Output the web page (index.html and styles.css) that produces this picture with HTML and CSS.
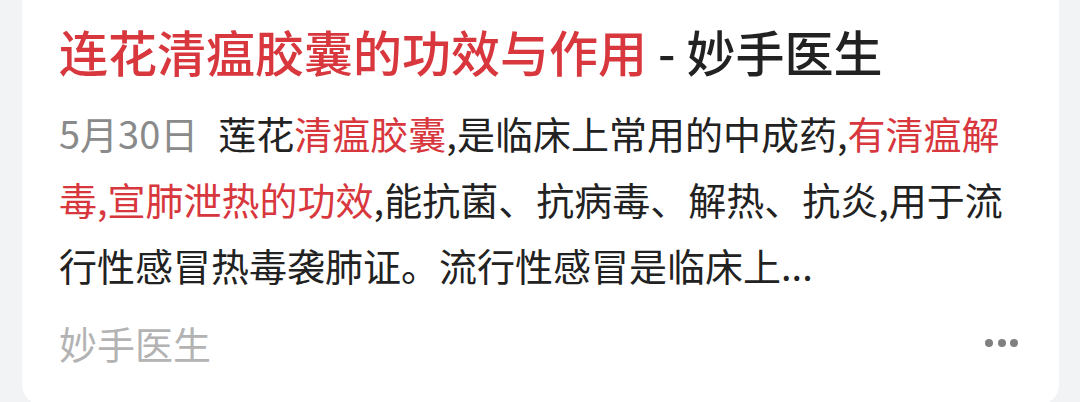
FILE: index.html
```html
<!DOCTYPE html>
<html lang="zh-CN">
<head>
<meta charset="utf-8">
<link rel="stylesheet" href="styles.css">
</head>
<body>
<div class="card">
  <h1 class="title"><span class="hl">连花清瘟胶囊的功效与作用</span> - 妙手医生</h1>
  <p class="summary"><span class="date">5月30日</span>莲花<span class="hl">清瘟胶囊</span>,是临床上常用的中成药,<span class="hl">有清瘟解毒,宣肺泄热的功效</span>,能抗菌、抗病毒、解热、抗炎,用于流行性感冒热毒袭肺证。流行性感冒是临床上...</p>
  <div class="footer">
    <span class="source">妙手医生</span>
    <span class="more"><i></i><i></i><i></i></span>
  </div>
</div>
</body>
</html>
```
FILE: styles.css
```css
html, body {
  margin: 0;
  padding: 0;
  background: #f2f3f5;
  font-family: "Noto Sans CJK SC", "Noto Sans", sans-serif;
  overflow: hidden;
}
.card {
  margin: 0 21px 0 22px;
  background: #ffffff;
  border-radius: 0 0 22px 22px;
  padding: 19px 37px 40px 37px;
  height: 406px;
  box-sizing: border-box;
}
.title {
  margin: 0;
  font-size: 49px;
  line-height: 64px;
  font-weight: 500;
  color: #222222;
  white-space: nowrap;
}
.hl {
  color: #d7373d;
}
.summary {
  margin: 17px 0 0 0;
  font-size: 38px;
  line-height: 66px;
  color: #222222;
}
.date {
  color: #8a8a8a;
  margin-right: 20px;
}
.footer {
  margin-top: 20px;
  display: flex;
  align-items: center;
  justify-content: space-between;
  height: 50px;
}
.source {
  font-size: 38px;
  color: #b3b3b3;
  line-height: 50px;
}
.more {
  display: flex;
  gap: 4.5px;
  margin-right: 4px;
}
.more i {
  width: 8px;
  height: 8px;
  border-radius: 50%;
  background: #808080;
}
```
